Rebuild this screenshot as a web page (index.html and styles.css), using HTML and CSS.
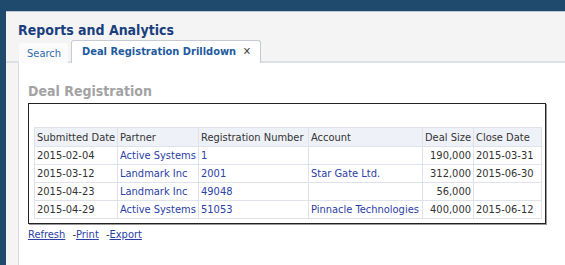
FILE: index.html
```html
<!DOCTYPE html>
<html lang="en">
<head>
    <meta charset="UTF-8">
    <title>Reports and Analytics</title>
    <link rel="stylesheet" href="styles.css">
</head>
<body>
<div class="frame">
    <!-- Header -->
    <div class="header">
        <h1 class="header__title">Reports and Analytics</h1>
        <div class="tabs">
            <div class="tab">Search</div>
            <div class="tab tab--active">Deal Registration Drilldown <span class="tab__close">&#x2715;</span></div>
        </div>
    </div>

    <!-- Body -->
    <div class="main">
        <div class="content">
            <h2 class="content__title">Deal Registration</h2>
            <div class="report">
                <table class="grid">
                    <colgroup>
                        <col class="col-date">
                        <col class="col-partner">
                        <col class="col-reg">
                        <col class="col-account">
                        <col class="col-size">
                        <col class="col-close">
                    </colgroup>
                    <thead>
                    <tr>
                        <th>Submitted Date</th>
                        <th>Partner</th>
                        <th>Registration Number</th>
                        <th>Account</th>
                        <th>Deal Size</th>
                        <th>Close Date</th>
                    </tr>
                    </thead>
                    <tbody>
                    <tr>
                        <td>2015-02-04</td>
                        <td class="link">Active Systems</td>
                        <td class="link">1</td>
                        <td class="link"></td>
                        <td class="num">190,000</td>
                        <td>2015-03-31</td>
                    </tr>
                    <tr>
                        <td>2015-03-12</td>
                        <td class="link">Landmark Inc</td>
                        <td class="link">2001</td>
                        <td class="link">Star Gate Ltd.</td>
                        <td class="num">312,000</td>
                        <td>2015-06-30</td>
                    </tr>
                    <tr>
                        <td>2015-04-23</td>
                        <td class="link">Landmark Inc</td>
                        <td class="link">49048</td>
                        <td class="link"></td>
                        <td class="num">56,000</td>
                        <td></td>
                    </tr>
                    <tr>
                        <td>2015-04-29</td>
                        <td class="link">Active Systems</td>
                        <td class="link">51053</td>
                        <td class="link">Pinnacle Technologies</td>
                        <td class="num">400,000</td>
                        <td>2015-06-12</td>
                    </tr>
                    </tbody>
                </table>
            </div>
            <div class="actions">
                <a href="#" class="actions__link">Refresh</a>
                <span class="actions__sep">-</span><a href="#" class="actions__link">Print</a>
                <span class="actions__sep">-</span><a href="#" class="actions__link">Export</a>
            </div>
        </div>
    </div>
</div>
</body>
</html>
```

FILE: styles.css
```css
:root {
    /* COLORS */
    --navy: #1f4a6e;
    --panel: #f4f4f4;
    --title: #1b3f7d;
    --tab-text: #2f6cb0;
    --link: #2a40a6;
    --text: #333;
    --grid-line: #dfe3e9;
    --grid-head: #eef2f8;

    font-family: Tahoma, "DejaVu Sans Condensed", "DejaVu Sans", sans-serif;
    font-size: 11px;
}

html,
body {
    height: 100%;
}

body {
    margin: 0;
    background-color: var(--navy);
    overflow: hidden;
}

.frame {
    display: flex;
    flex-direction: column;
    height: calc(100% - 11px);
    margin: 11px 0 0 6px;
    background-color: var(--panel);
    border-top: 1px solid #b9c7d6;
}

.header {
    display: flex;
    flex-direction: column;
    height: 49px;
    padding-left: 12px;
    border-bottom: 2px solid #dde1e7;
}

.header__title {
    margin: 8px 0 0;
    color: var(--title);
    font-size: 14px;
    font-weight: bold;
    line-height: 20px;
}

.tabs {
    display: flex;
    align-items: flex-end;
    gap: 3px;
    margin-top: auto;
    margin-bottom: -2px;
    padding-left: 1px;
}

.tab {
    height: 20px;
    padding: 0 7px 0 8px;
    background-color: #fbfbfb;
    border-radius: 3px 3px 0 0;
    color: var(--tab-text);
    line-height: 21px;
}

.tab--active {
    height: 22px;
    padding: 0 9px 0 10px;
    background-color: #fff;
    border: 1px solid #c6cbd2;
    border-bottom: none;
    color: #1f5ba0;
    font-weight: bold;
    line-height: 22px;
}

.tab__close {
    margin-left: 3px;
    color: #444;
    font-weight: normal;
    font-size: 11px;
}

.main {
    flex: 1;
    padding-left: 12px;
}

.content {
    height: 100%;
    padding: 0 0 0 9px;
    background-color: #fff;
    border-left: 1px solid #d6dbe1;
}

.content__title {
    margin: 0;
    padding-top: 18px;
    color: #a3a3a3;
    font-size: 14px;
    font-weight: bold;
    line-height: 20px;
}

.report {
    width: 508px;
    margin-top: 2px;
    padding: 23px 3px 4px 5px;
    border: 1px solid #222;
    box-shadow: 1px 1px 0 #999;
}

.grid {
    width: 100%;
    table-layout: fixed;
    border-collapse: collapse;
    color: var(--text);
    border: 1px solid var(--grid-line);
}

.grid th,
.grid td {
    height: 17px;
    padding: 0 2px;
    border: 1px solid var(--grid-line);
    text-align: left;
    white-space: nowrap;
    overflow: hidden;
    font-weight: normal;
}

.grid th {
    background-color: var(--grid-head);
    height: 18px;
}

.grid .link {
    color: var(--link);
}

.grid .num {
    text-align: right;
}

.col-date { width: 83px; }
.col-partner { width: 81px; }
.col-reg { width: 110px; }
.col-account { width: 114px; }
.col-size { width: 51px; }

.actions {
    margin-top: 4px;
    color: #333;
}

.actions__link {
    color: var(--link);
    text-decoration: underline;
}

.actions__sep {
    margin-left: 4px;
}
```
